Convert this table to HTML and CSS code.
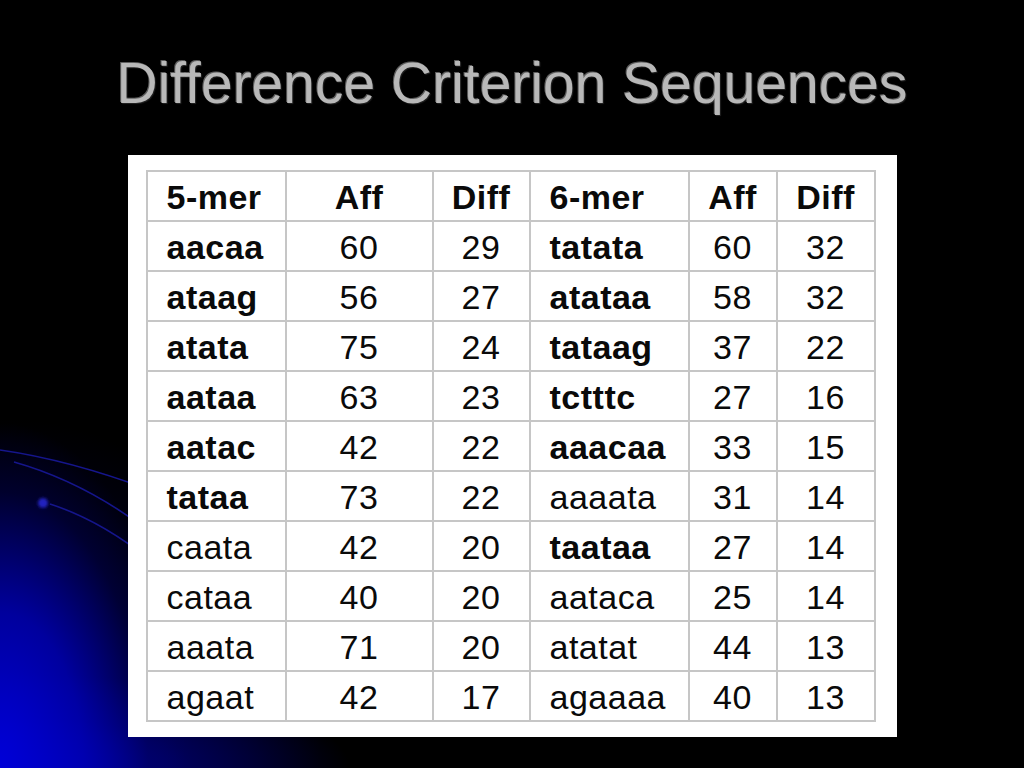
FILE: index.html
```html
<!DOCTYPE html>
<html>
<head>
<meta charset="utf-8">
<link rel="stylesheet" href="styles.css">
</head>
<body>
<div class="slide">
  <svg class="swoosh" width="150" height="160" viewBox="0 0 150 160">
    <defs>
      <filter id="blur" x="-50%" y="-50%" width="200%" height="200%"><feGaussianBlur stdDeviation="1.6"/></filter>
    </defs>
    <path d="M0 30 Q70 40 150 70" fill="none" stroke="#15158c" stroke-width="1.6"/>
    <path d="M14 42 Q85 62 150 112" fill="none" stroke="#15158c" stroke-width="1.6"/>
    <path d="M50 84 Q100 100 150 140" fill="none" stroke="#15158c" stroke-width="1.6"/>
    <circle cx="43" cy="83" r="5" fill="#2222c0" filter="url(#blur)"/>
  </svg>
  <h1 class="title">Difference Criterion Sequences</h1>
  <div class="figure">
    <table class="seq">
      <colgroup>
        <col class="c1"><col class="c2"><col class="c3"><col class="c4"><col class="c5"><col class="c6">
      </colgroup>
      <thead>
        <tr><th class="left">5-mer</th><th>Aff</th><th>Diff</th><th class="left">6-mer</th><th>Aff</th><th>Diff</th></tr>
      </thead>
      <tbody>
        <tr><td class="left b">aacaa</td><td>60</td><td>29</td><td class="left b">tatata</td><td>60</td><td>32</td></tr>
        <tr><td class="left b">ataag</td><td>56</td><td>27</td><td class="left b">atataa</td><td>58</td><td>32</td></tr>
        <tr><td class="left b">atata</td><td>75</td><td>24</td><td class="left b">tataag</td><td>37</td><td>22</td></tr>
        <tr><td class="left b">aataa</td><td>63</td><td>23</td><td class="left b">tctttc</td><td>27</td><td>16</td></tr>
        <tr><td class="left b">aatac</td><td>42</td><td>22</td><td class="left b">aaacaa</td><td>33</td><td>15</td></tr>
        <tr><td class="left b">tataa</td><td>73</td><td>22</td><td class="left">aaaata</td><td>31</td><td>14</td></tr>
        <tr><td class="left">caata</td><td>42</td><td>20</td><td class="left b">taataa</td><td>27</td><td>14</td></tr>
        <tr><td class="left">cataa</td><td>40</td><td>20</td><td class="left">aataca</td><td>25</td><td>14</td></tr>
        <tr><td class="left">aaata</td><td>71</td><td>20</td><td class="left">atatat</td><td>44</td><td>13</td></tr>
        <tr><td class="left">agaat</td><td>42</td><td>17</td><td class="left">agaaaa</td><td>40</td><td>13</td></tr>
      </tbody>
    </table>
  </div>
</div>
</body>
</html>
```

FILE: styles.css
```css
html, body {
  margin: 0;
  padding: 0;
  background: #000;
}

.slide {
  position: relative;
  width: 1024px;
  height: 768px;
  overflow: hidden;
  display: flex;
  flex-direction: column;
  align-items: center;
  background:
    radial-gradient(ellipse 185px 345px at 0 100%, rgba(0, 0, 215, 1) 0%, rgba(0, 0, 185, 0.8) 45%, rgba(0, 0, 100, 0.35) 80%, rgba(0, 0, 0, 0) 100%),
    radial-gradient(ellipse 350px 95px at 0 100%, rgba(0, 0, 190, 0.95) 0%, rgba(0, 0, 130, 0.55) 55%, rgba(0, 0, 0, 0) 100%),
    radial-gradient(ellipse 320px 350px at 0 100%, rgba(0, 0, 130, 0.7) 0%, rgba(0, 0, 80, 0.35) 60%, rgba(0, 0, 0, 0) 100%),
    #000;
  font-family: "Liberation Sans", Arial, sans-serif;
}

.swoosh {
  position: absolute;
  left: 0;
  top: 420px;
}

.title {
  position: relative;
  margin: 51px 0 0 0;
  height: 64px;
  font-size: 57px;
  line-height: 64px;
  font-weight: normal;
  color: #b8b8b8;
  text-shadow: -1px -1px 0 rgba(235, 235, 235, 0.4), 1px 1px 1px rgba(40, 40, 40, 0.9);
  white-space: nowrap;
}

.figure {
  position: relative;
  margin-top: 40px;
  background: #fff;
  padding: 15px 21px 15px 18px;
}

.seq {
  border-collapse: collapse;
  table-layout: fixed;
  width: 728px;
  font-size: 34px;
  letter-spacing: 0.5px;
  color: #0a0a0a;
}

.c1 { width: 139px; }
.c2 { width: 147px; }
.c3 { width: 97px; }
.c4 { width: 159px; }
.c5 { width: 88px; }
.c6 { width: 98px; }

.seq th,
.seq td {
  border: 2px solid #c6c6c6;
  height: 50px;
  padding: 3px 0 0 0;
  box-sizing: border-box;
  text-align: center;
  vertical-align: middle;
  font-weight: normal;
  white-space: nowrap;
}

.seq th {
  font-weight: bold;
}

.seq .left {
  text-align: left;
  padding-left: 19px;
}

.seq .b {
  font-weight: bold;
}
```
